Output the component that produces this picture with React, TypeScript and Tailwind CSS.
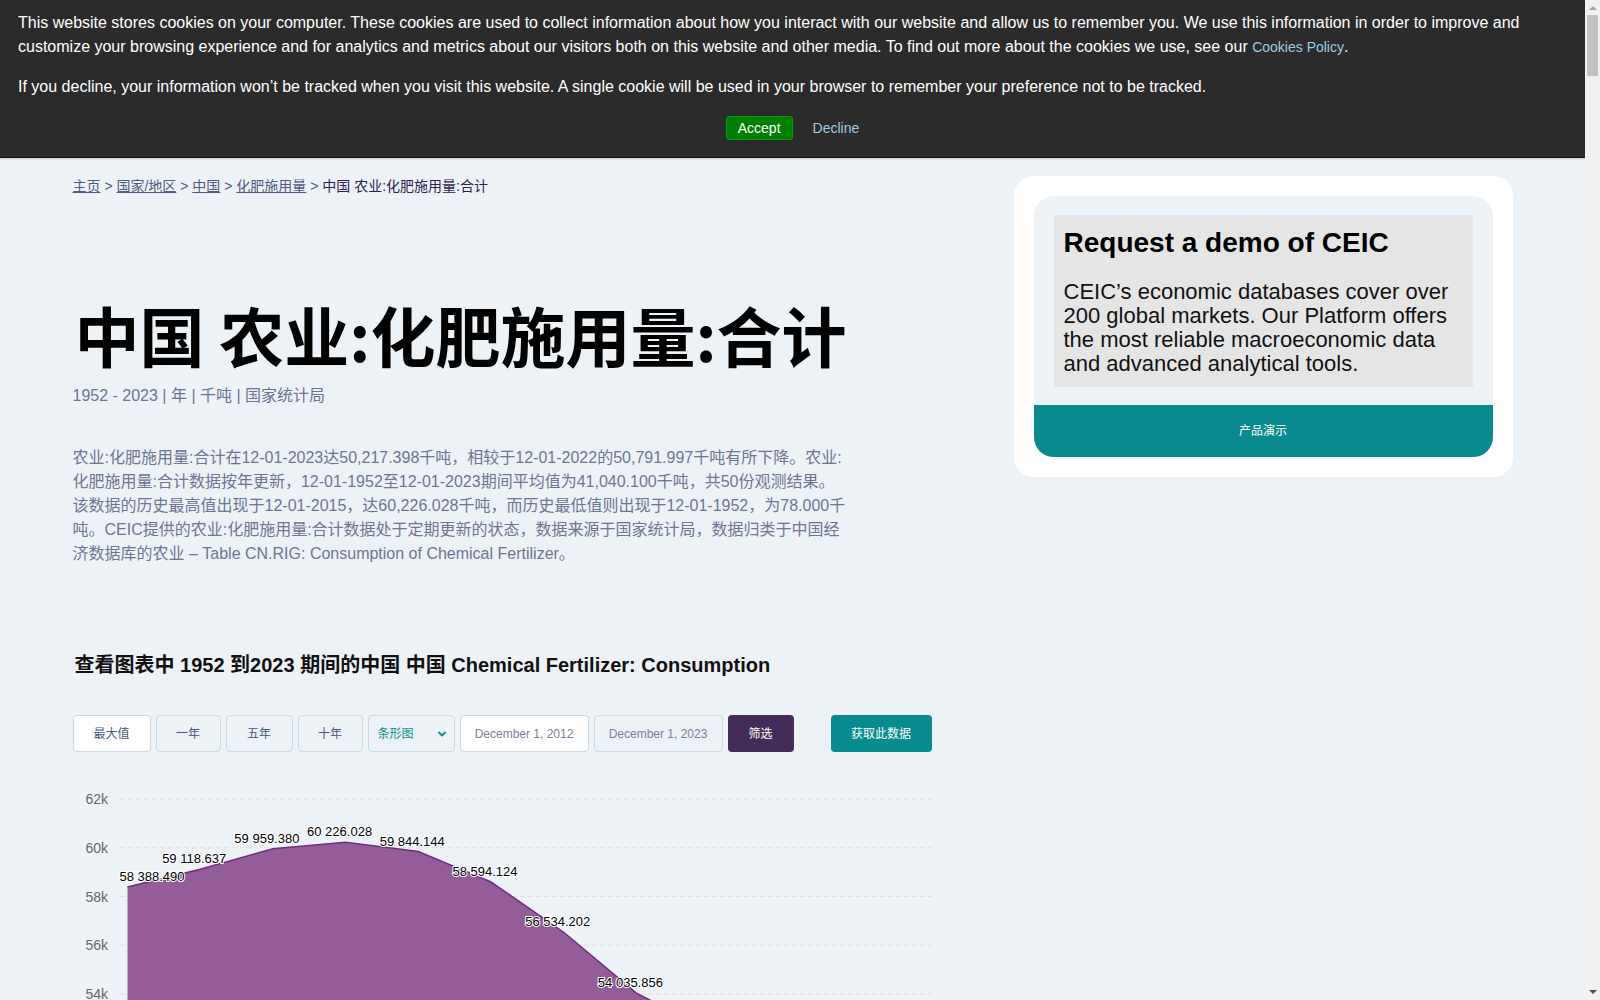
import { ChevronDown } from "lucide-react";

const values = [
  58388.49, 59118.637, 59959.38, 60226.028, 59844.144, 58594.124, 56534.202,
  54035.856, 52506.5, 51912.6, 50791.997, 50217.398,
];

const fmt = (v: number) => {
  const [int, dec] = v.toFixed(3).split(".");
  return int.replace(/\B(?=(\d{3})+(?!\d))/g, " ") + "." + dec;
};

const px = (i: number) => 54.5 + i * 72.7;
const py = (v: number) => 29 + (62000 - v) * 0.024375;

function CookieBanner() {
  return (
    <div className="h-[158px] border-b border-[#111] bg-[#2b2b2b] px-[18px] pt-[11px] text-base leading-6 text-white shadow-[0_1px_2px_rgba(0,0,0,0.15)]">
      <p>
        This website stores cookies on your computer. These cookies are used to
        collect information about how you interact with our website and allow us
        to remember you. We use this information in order to improve and
        customize your browsing experience and for analytics and metrics about
        our visitors both on this website and other media. To find out more
        about the cookies we use, see our{" "}
        <a className="text-sm text-[#9ccbe0]">Cookies Policy</a>.
      </p>
      <p className="mt-4">
        If you decline, your information won’t be tracked when you visit this
        website. A single cookie will be used in your browser to remember your
        preference not to be tracked.
      </p>
      <div className="mt-[17px] flex items-center justify-center gap-5">
        <button className="h-6 rounded-[3px] border border-[#0a9a0a] bg-[#008000] px-[11px] text-sm leading-[22px] text-white">
          Accept
        </button>
        <button className="h-6 text-sm leading-6 text-[#9ccbe0]">Decline</button>
      </div>
    </div>
  );
}

function Scrollbar() {
  return (
    <div className="relative h-screen w-[15px] shrink-0 bg-[#f1f1f1]">
      <div className="mx-auto mt-[6px] h-0 w-0 border-x-[4px] border-b-[4px] border-x-transparent border-b-[#a3a3a3]" />
      <div className="mx-auto mt-[5px] h-[61px] w-[11px] bg-[#c1c1c1]" />
      <div className="absolute bottom-[6px] left-[3.5px] h-0 w-0 border-x-[4px] border-t-[4px] border-x-transparent border-t-[#505050]" />
    </div>
  );
}

function Chart() {
  const pts = values.map((v, i) => `${px(i)},${py(v)}`).join(" ");
  const area = `${px(0)},400 ${pts} ${px(values.length - 1)},400`;
  const ticks = [62, 60, 58, 56, 54, 52, 50];
  return (
    <svg width="864" height="300" className="mt-[18px] block overflow-hidden">
      {ticks.map((t) => {
        const y = py(t * 1000);
        return (
          <g key={t}>
            <line x1="47" x2="859" y1={y} y2={y} stroke="#dcdfe4" strokeDasharray="5 3" />
            <text x="35" y={y} textAnchor="end" dominantBaseline="central" fontSize="14" fill="#666" fontFamily="Liberation Sans, Arial, sans-serif">
              {t}k
            </text>
          </g>
        );
      })}
      <polygon points={area} fill="#955c9c" />
      <polyline points={pts} fill="none" stroke="#6e2f7c" strokeWidth="1.5" />
      {values.map((v, i) => {
        const cx = i === 0 ? 79 : px(i) - 6;
        return (
          <text
            key={i}
            x={cx}
            y={py(v) - 10.5}
            textAnchor="middle"
            dominantBaseline="central"
            fontSize="13"
            fill="#000"
            stroke="#fff"
            strokeWidth="2"
            paintOrder="stroke"
            fontFamily="Liberation Sans, Arial, sans-serif"
          >
            {fmt(v)}
          </text>
        );
      })}
    </svg>
  );
}

function Toolbar() {
  const box = "flex h-[37px] items-center justify-center rounded-[4px] border border-[#c9d9e3] text-xs";
  return (
    <div className="mt-9 flex items-center gap-[5px] text-[#4a5580]">
      <button className={`${box} w-[78px] bg-white`}>最大值</button>
      <button className={`${box} w-[65px]`}>一年</button>
      <button className={`${box} w-[67px]`}>五年</button>
      <button className={`${box} w-[65px]`}>十年</button>
      <div className="flex h-[37px] w-[87px] items-center justify-between rounded-[4px] border border-[#c9d9e3] pr-[6px] pl-[9px] text-xs text-[#0a8f8f]">
        <span>条形图</span>
        <ChevronDown className="h-3 w-3" strokeWidth={4} />
      </div>
      <div className={`${box} w-[129px] bg-white text-[#7a8299]`}>December 1, 2012</div>
      <div className={`${box} w-[129px] text-[#7a8299]`}>December 1, 2023</div>
      <button className="flex h-[37px] w-[66px] items-center justify-center rounded-[4px] bg-[#432c5a] text-xs text-white">
        筛选
      </button>
      <button className="ml-[32px] flex h-[37px] w-[101px] items-center justify-center rounded-[4px] bg-[#078b8f] text-xs text-white">
        获取此数据
      </button>
    </div>
  );
}

export default function App() {
  return (
    <div className="flex h-screen w-full overflow-hidden bg-[#edf2f7] font-['Liberation_Sans','Noto_Sans_CJK_SC',sans-serif]">
      <div className="min-w-0 flex-1 overflow-hidden">
        <CookieBanner />
        <main className="mx-auto flex max-w-[1440px] pt-[18px]">
          <section className="w-[864px] shrink-0">
            <nav className="text-sm leading-5 text-[#4f5b80]">
              <a className="underline">主页</a> &gt; <a className="underline">国家/地区</a> &gt;{" "}
              <a className="underline">中国</a> &gt; <a className="underline">化肥施用量</a> &gt;{" "}
              <span className="text-[#2e2150]">中国 农业:化肥施用量:合计</span>
            </nav>
            <h1 className="mt-[100px] ml-[2px] font-['Noto_Sans_CJK_SC',sans-serif] text-[65px] leading-[76px] font-bold text-black">
              中国 农业:化肥施用量:合计
            </h1>
            <p className="mt-3 text-base leading-6 text-[#6b7494]">
              1952 - 2023 | 年 | 千吨 | 国家统计局
            </p>
            <p className="mt-[38px] w-[776px] text-base leading-6 text-[#6d7593]">
              农业:化肥施用量:合计在12-01-2023达50,217.398千吨，相较于12-01-2022的50,791.997千吨有所下降。农业:化肥施用量:合计数据按年更新，12-01-1952至12-01-2023期间平均值为41,040.100千吨，共50份观测结果。该数据的历史最高值出现于12-01-2015，达60,226.028千吨，而历史最低值则出现于12-01-1952，为78.000千吨。CEIC提供的农业:化肥施用量:合计数据处于定期更新的状态，数据来源于国家统计局，数据归类于中国经济数据库的农业 – Table CN.RIG: Consumption of Chemical Fertilizer。
            </p>
            <h2 className="mt-[85px] ml-[2px] text-[20px] leading-7 font-bold text-[#111]">
              查看图表中 1952 到2023 期间的中国 中国 Chemical Fertilizer: Consumption
            </h2>
            <Toolbar />
            <Chart />
          </section>
          <aside className="ml-[77px] w-[499px] shrink-0">
            <div className="rounded-[20px] bg-white p-5">
              <div className="rounded-[20px] bg-[#edf2f7] pt-[19px]">
                <div className="mx-5 bg-[#e5e5e5] px-[10px] pt-3 pb-[11px]">
                  <h3 className="text-[28px] leading-8 font-bold text-black">Request a demo of CEIC</h3>
                  <p className="mt-[21px] text-[22px] leading-6 text-[#111]">
                    CEIC’s economic databases cover over 200 global markets. Our
                    Platform offers the most reliable macroeconomic data and
                    advanced analytical tools.
                  </p>
                </div>
                <button className="mt-[18px] flex h-[52px] w-full items-center justify-center rounded-b-[20px] bg-[#078b8f] text-xs text-white">
                  产品演示
                </button>
              </div>
            </div>
          </aside>
        </main>
      </div>
      <Scrollbar />
    </div>
  );
}
